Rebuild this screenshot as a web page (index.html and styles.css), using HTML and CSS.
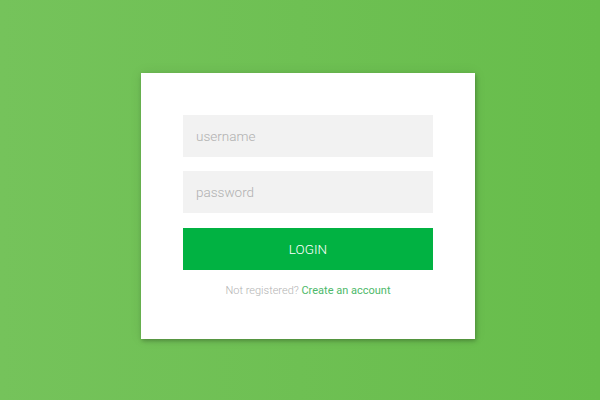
FILE: index.html
```html
<!DOCTYPE html>
<html>
<head>
<meta charset="utf-8">
<link rel="stylesheet" href="styles.css">
</head>
<body>
<div class="page">
  <form class="card">
    <input class="field" type="text" placeholder="username">
    <input class="field" type="password" placeholder="password">
    <button class="login" type="button">LOGIN</button>
    <p class="message">Not registered? <a href="#">Create an account</a></p>
  </form>
</div>
</body>
</html>
```
FILE: styles.css
```css
html, body {
  margin: 0;
  height: 100%;
}
body {
  background: linear-gradient(to right, #75c35b, #67bd4b);
  font-family: Roboto, "Liberation Sans", sans-serif;
}
.page {
  display: flex;
  justify-content: center;
  padding: 73px 0 0 16px;
}
.card {
  width: 334px;
  box-sizing: border-box;
  padding: 42px 42px 41px;
  background: #fff;
  display: flex;
  flex-direction: column;
  box-shadow: 1px 2px 4px rgba(0,0,0,0.25), 0 0 12px rgba(0,0,0,0.08);
  margin: 0;
}
.field {
  height: 42px;
  box-sizing: border-box;
  border: 0;
  outline: 0;
  background: #f2f2f2;
  padding: 0 13px;
  font-family: inherit;
  font-size: 13.5px;
  font-weight: 300;
  color: #333;
  margin: 0 0 14px;
}
.field::placeholder {
  color: #b0b0b0;
}
.login {
  height: 42px;
  margin-top: 1px;
  border: 0;
  background: #01b242;
  color: #fff;
  font-family: inherit;
  font-size: 13.5px;
  font-weight: 300;
  cursor: pointer;
}
.message {
  margin: 14px 0 0;
  line-height: 14px;
  font-size: 11px;
  font-weight: 300;
  color: #b3b3b3;
  text-align: center;
}
.message a {
  color: #4db96a;
  text-decoration: none;
  font-weight: 400;
}
```
